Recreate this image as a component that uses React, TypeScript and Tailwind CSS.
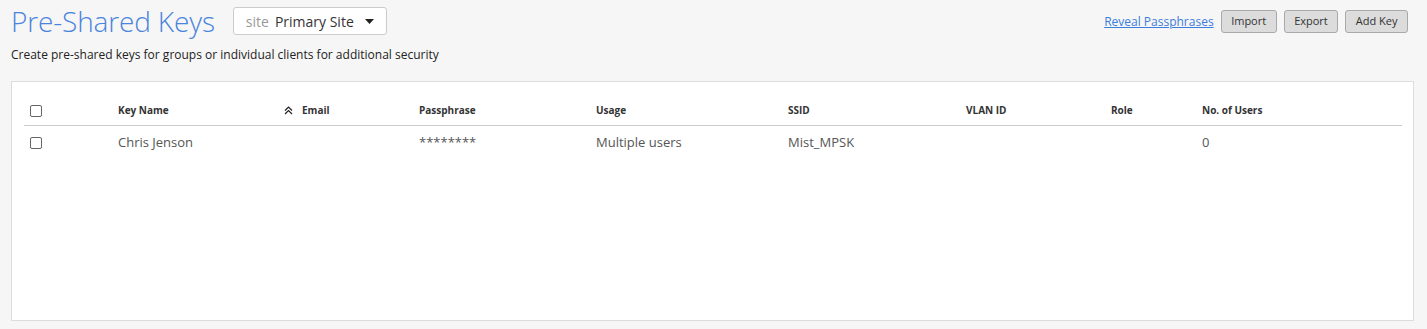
import { useState } from "react";

const columns = "grid-cols-[94px_166px_135px_177px_192px_178px_145px_91px_1fr]";

function Checkbox() {
  const [checked, setChecked] = useState(false);
  return (
    <input
      type="checkbox"
      checked={checked}
      onChange={() => setChecked(!checked)}
      className="appearance-none w-[12px] h-[12px] border border-[#666] rounded-[2px] bg-white"
    />
  );
}

export default function App() {
  const keys = [
    {
      name: "Chris Jenson",
      email: "",
      passphrase: "********",
      usage: "Multiple users",
      ssid: "Mist_MPSK",
      vlan: "",
      role: "",
      users: 0,
    },
  ];

  return (
    <div className="min-h-[329px] bg-[#f6f6f6] font-['Open_Sans',sans-serif] text-[#333] pl-[11px] pr-[13px] pt-[5px] pb-[8px]">
      {/* Header */}
      <div className="flex items-start justify-between">
        <div className="flex items-center">
          <h1 className="text-[28px] leading-[32px] font-light text-[#4a84dc] tracking-[-0.15px]">Pre-Shared Keys</h1>
          <button className="ml-[18px] flex items-center h-[28px] w-[154px] px-[12px] bg-white border border-[#ccc] rounded-[3px] text-[14px]">
            <span className="text-[#999]">site</span>
            <span className="ml-[6px] text-[#333]">Primary Site</span>
            <svg className="ml-auto" width="9" height="5" viewBox="0 0 9 5">
              <path d="M0 0h9L4.5 5z" fill="#222" />
            </svg>
          </button>
        </div>
        <div className="flex items-center gap-[7px] mt-[5px] mr-[6px]">
          <a href="#" className="text-[12px] text-[#3b7ddd] underline">Reveal Passphrases</a>
          <button className="h-[23px] px-[9.5px] bg-[#dcdcdc] border border-[#a9a9a9] rounded-[3px] text-[11px] text-[#333]">Import</button>
          <button className="h-[23px] px-[9.5px] bg-[#dcdcdc] border border-[#a9a9a9] rounded-[3px] text-[11px] text-[#333]">Export</button>
          <button className="h-[23px] px-[9.5px] bg-[#dcdcdc] border border-[#a9a9a9] rounded-[3px] text-[11px] text-[#333]">Add Key</button>
        </div>
      </div>

      <p className="mt-[9px] text-[12px] text-[#222]">
        Create pre-shared keys for groups or individual clients for additional security
      </p>

      {/* Table panel */}
      <div className="mt-[17px] h-[240px] bg-white border border-[#ddd] pt-[14px] pl-[12px] pr-[11px]">
        <div className={`grid ${columns} h-[30px] items-center border-b border-[#ccc] text-[10px] font-bold text-[#333]`}>
          <div className="pl-[6px] flex items-center"><Checkbox /></div>
          <div>Key Name</div>
          <div className="flex items-center">
            <svg width="9" height="9" viewBox="0 0 9 9" className="mr-[9px]">
              <path d="M1 4.5L4.5 1L8 4.5M1 8L4.5 4.5L8 8" fill="none" stroke="#222" strokeWidth="1.2" />
            </svg>
            Email
          </div>
          <div>Passphrase</div>
          <div>Usage</div>
          <div>SSID</div>
          <div>VLAN ID</div>
          <div>Role</div>
          <div>No. of Users</div>
        </div>
        {keys.map((k) => (
          <div key={k.name} className={`grid ${columns} h-[34px] items-center text-[13px] text-[#555]`}>
            <div className="pl-[6px] flex items-center"><Checkbox /></div>
            <div>{k.name}</div>
            <div>{k.email}</div>
            <div>{k.passphrase}</div>
            <div>{k.usage}</div>
            <div>{k.ssid}</div>
            <div>{k.vlan}</div>
            <div>{k.role}</div>
            <div>{k.users}</div>
          </div>
        ))}
      </div>
    </div>
  );
}
